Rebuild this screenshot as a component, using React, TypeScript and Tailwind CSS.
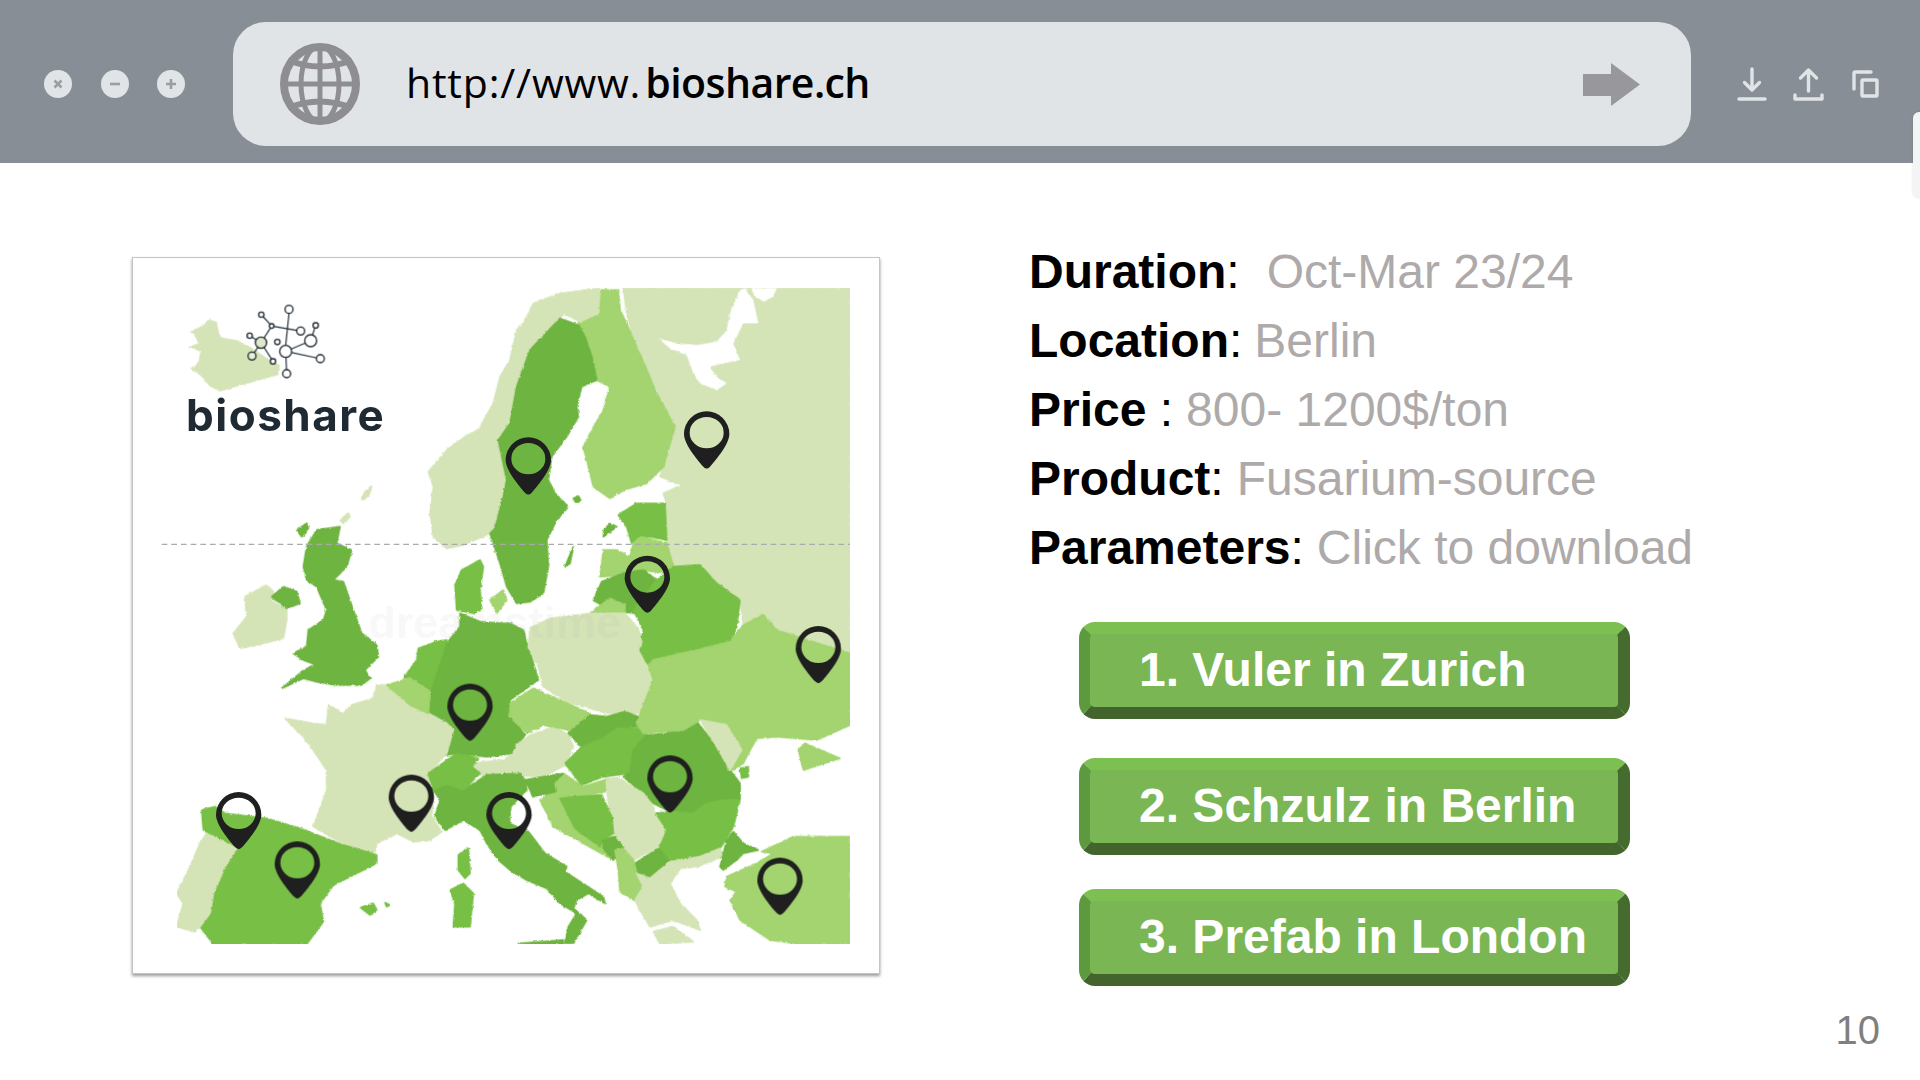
const LIGHT = "#d5e4b7";
const PALE = "#a3d46f";
const MID = "#78bf45";
const DARK = "#6eb43f";

// coordinates are 3x page pixels, origin at (170, 280)
const globalShapes: [string, string][] = [
  [LIGHT, "775,575 830,510 885,470 925,450 970,370 990,290 1020,240 1040,150 1060,130 1090,70 1170,40 1290,25 1285,100 1230,125 1180,100 1170,115 1080,210 1040,320 1020,430 985,480 1010,600 1000,650 975,745 960,760 880,795 830,805 790,770 780,700 790,620"],
  [DARK, "1170,115 1225,135 1245,170 1265,230 1280,300 1235,320 1220,380 1225,410 1190,470 1145,530 1135,600 1155,640 1195,680 1160,720 1130,780 1135,860 1120,940 1080,965 1040,970 1010,920 990,850 960,760 975,745 1000,650 1010,600 985,480 1020,430 1040,320 1080,210"],
  [DARK, "440,750 510,740 500,790 545,810 530,860 490,900 520,905 550,990 575,1060 620,1095 625,1130 585,1170 600,1195 575,1215 500,1215 440,1205 400,1195 335,1225 390,1180 420,1160 440,1155 400,1140 370,1120 410,1100 415,1050 460,1020 470,990 440,920 410,900 400,860 410,800"],
  [LIGHT, "225,950 290,915 320,945 300,960 350,990 350,1020 340,1075 260,1095 210,1105 190,1060 230,1010"],
  [DARK, "305,950 340,920 380,935 390,970 350,985"],
  [DARK, "380,750 410,730 415,745 395,770"],
  [LIGHT, "575,660 585,635 605,618 595,650"],
  [LIGHT, "510,720 535,700 540,710 520,730"],
  [MID, "855,915 875,870 930,840 940,860 930,930 935,985 910,1000 860,990"],
  [PALE, "960,960 1000,930 1010,960 980,1000"],
  [DARK, "870,1000 930,1025 1000,1030 1020,1030 1060,1050 1075,1100 1105,1200 1020,1260 1020,1310 1065,1365 1030,1410 1030,1420 950,1430 860,1420 830,1425 850,1360 830,1330 770,1300 780,1230 830,1090 870,1040"],
  [LIGHT, "905,1450 1000,1440 1030,1420 1040,1395 1080,1365 1155,1340 1195,1365 1210,1400 1185,1455 1120,1490 1020,1485 930,1485"],
  [DARK, "790,1530 830,1515 880,1530 950,1485 1050,1480 1065,1500 1070,1530 1050,1550 1022,1580 1018,1630 1075,1655 1125,1720 1190,1760 1185,1775 1300,1850 1305,1870 1255,1840 1220,1860 1210,1885 1250,1920 1210,1990 1185,1990 1195,1940 1220,1900 1170,1870 1130,1825 1070,1800 1020,1770 985,1740 950,1690 930,1650 880,1620 825,1650 795,1610 810,1560"],
  [MID, "1510,860 1590,855 1640,910 1710,960 1700,1040 1680,1085 1580,1110 1450,1140 1435,1155 1405,1110 1420,1050 1390,990 1460,900"],
];

const northEast: [string, string][] = [
  [LIGHT, "340,25 1020,25 1020,1120 860,1070 800,1050 760,1005 700,1035 690,960 620,910 570,855 490,860 470,790 470,670 460,640 515,615 450,590 495,440 440,340 410,270 375,190 350,100"],
  ["#ffffff", "445,175 500,190 560,195 620,185 650,150 660,100 690,30 705,25 730,60 745,130 700,130 670,190 690,240 640,250 600,260 620,290 650,310 620,330 570,310 550,280 530,225 480,205"],
  ["#ffffff", "725,25 800,25 790,50 760,65 730,45"],
  [PALE, "270,30 325,30 330,90 350,130 375,190 410,270 440,340 495,440 460,560 410,610 340,630 300,655 250,620 235,560 220,500 240,460 280,390 300,320 260,300 245,230 225,170 205,130 265,100"],
  [MID, "325,705 380,670 465,670 470,780 420,770 385,770 365,790 350,740"],
  [PALE, "270,890 280,810 320,810 360,830 370,790 395,770 470,790 490,860 460,880 400,870 350,885"],
  [DARK, "275,905 340,880 400,870 440,900 370,990 375,1000 300,990 250,960"],
  [PALE, "240,1000 300,955 345,975 345,1005"],
  [DARK, "165,860 190,800 180,850"],
  [DARK, "280,770 320,740 300,730 282,750"],
  ["#ffffff", "105,712 165,712 150,722 125,725"],
  [DARK, "190,655 205,648 212,660 198,668"],
];

const southWest: [string, string][] = [
  [LIGHT, "345,325 430,340 470,345 475,285 520,310 545,285 610,265 620,225 650,225 680,250 720,285 775,310 830,340 850,360 830,430 775,490 790,560 785,620 815,665 780,690 730,695 680,670 620,700 615,725 560,720 500,690 430,650 470,540 470,480 430,420 400,380"],
  [MID, "95,600 135,590 165,610 290,625 390,655 520,705 620,735 620,760 560,790 490,825 450,880 460,935 410,1002 130,1002 90,950 120,910 130,850 165,770 200,715 130,680 100,660"],
  [LIGHT, "110,670 130,680 200,715 165,770 130,850 120,910 90,950 75,965 20,950 40,880 20,850 60,770 90,700"],
  [MID, "572,893 610,880 620,900 600,915"],
  [MID, "645,878 660,885 650,890"],
  [MID, "865,735 895,715 900,790 885,805 865,780"],
  [MID, "840,840 880,820 910,850 900,950 850,950 855,880"],
  [MID, "700,205 740,150 745,115 800,95 830,90 800,180 780,240 720,200"],
  [PALE, "650,225 720,205 780,245 775,310 720,285 680,250"],
  [MID, "775,490 860,430 925,445 905,470 930,490 880,540 830,520 790,540"],
];

const southEast: [string, string][] = [
  [LIGHT, "60,55 120,25 240,10 345,10 385,55 395,100 385,120 430,210 390,310 290,310 170,275 100,230 85,170 55,110"],
  [PALE, "0,280 70,235 240,310 180,360 100,345 50,370 0,320"],
  [DARK, "175,370 240,315 290,320 345,305 385,320 385,350 320,355 280,385 215,410"],
  [MID, "165,460 215,410 280,385 320,355 385,355 410,375 370,420 360,490 280,500 215,525"],
  [DARK, "410,375 470,370 560,335 620,410 660,480 690,520 690,570 640,570 590,580 550,610 480,605 430,580 400,550 340,500 360,490 370,420"],
  [PALE, "430,150 560,120 660,95 700,45 760,15 800,60 860,80 1020,130 1020,345 920,390 800,380 740,385 715,430 700,460 665,480 695,420 650,345 570,330 520,360 400,370 380,340 395,300 430,210 415,165"],
  [LIGHT, "570,330 650,345 695,420 660,480 620,410"],
  [PALE, "865,420 885,400 990,445 880,480"],
  [MID, "690,475 715,470 715,500 695,505"],
  [MID, "435,610 480,605 550,610 590,580 640,570 690,570 670,650 630,715 570,740 480,755 445,710 465,660"],
  [LIGHT, "285,505 330,505 350,520 400,550 430,590 435,615 465,660 445,710 370,750 340,715 310,670 300,610"],
  [PALE, "130,520 160,490 220,530 285,510 285,545 230,555 150,565 200,660 285,710 310,750 220,700 130,650 90,570 135,540"],
  [MID, "150,565 275,555 305,620 310,670 280,690 270,710 195,655"],
  [DARK, "45,510 100,500 160,490 130,520 135,545 70,560"],
  [DARK, "280,690 310,680 340,710 310,750 280,715"],
  [DARK, "375,760 445,715 480,755 420,805 380,790"],
  [PALE, "315,720 340,715 370,750 380,790 400,830 370,870 330,845 325,780"],
  [LIGHT, "375,870 400,830 380,790 420,805 480,755 570,740 630,715 640,740 560,770 510,775 480,820 510,880 560,930 570,960 490,930 420,950 390,900"],
  [LIGHT, "430,965 490,950 550,995 450,1002"],
  [DARK, "630,770 650,690 670,665 700,700 745,720 700,730 680,750 640,780"],
  [PALE, "755,725 850,680 1020,680 1020,1002 870,1002 780,990 690,930 660,870 680,845 645,830 650,800 740,760 790,730"],
  [DARK, "25,1000 100,995 160,990 160,1002"],
];

const iceland = "60,155 100,135 115,118 140,125 150,170 170,175 200,180 240,200 300,240 330,255 325,285 270,300 200,320 150,335 120,320 90,285 60,265 85,250 90,215 55,200 85,190 75,170";

const pins = [
  [1610, 462], [1075, 540], [1432, 895], [1945, 1106], [1500, 1494], [1830, 1801],
  [900, 1279], [724, 1552], [1017, 1604], [206, 1604], [382, 1752],
];

const logoLines = [
  [357, 100, 347, 196], [305, 138, 392, 153], [274, 104, 305, 138], [305, 138, 273, 188],
  [239, 167, 273, 188], [273, 188, 246, 228], [273, 188, 309, 244], [347, 214, 422, 182],
  [347, 214, 451, 236], [347, 214, 350, 281], [437, 136, 422, 182],
];
const logoNodes: [number, number, number, string][] = [
  [357, 88, 12, "#fff"], [274, 104, 8, "#fff"], [305, 138, 7, "#fff"], [392, 153, 12, "#fff"],
  [437, 136, 8, "#fff"], [422, 182, 18, "#fff"], [239, 167, 8, "#fff"], [273, 188, 17, "#dfe8cb"],
  [322, 186, 8, "#fff"], [347, 214, 18, "#fff"], [246, 228, 12, "#e9f0d8"], [309, 244, 8, "#fff"],
  [451, 236, 12, "#fff"], [350, 281, 12, "#fff"],
];

function Shapes({ items, x = 0, y = 0 }: { items: [string, string][]; x?: number; y?: number }) {
  return (
    <g transform={`translate(${x} ${y})`}>
      {items.map(([fill, points], i) => (
        <polygon key={i} points={points} fill={fill} stroke={fill === "#ffffff" ? "none" : fill} strokeWidth={5} strokeLinejoin="round" />
      ))}
    </g>
  );
}

function EuropeMap() {
  return (
    <svg viewBox="-30 24 2070 1968" className="block h-[656px] w-[690px]">
      <defs>
        <filter id="rough" x="-2%" y="-2%" width="104%" height="104%">
          <feTurbulence type="fractalNoise" baseFrequency="0.09" numOctaves="2" seed="4" />
          <feDisplacementMap in="SourceGraphic" scale="8" xChannelSelector="R" yChannelSelector="G" />
          <feGaussianBlur stdDeviation="1.2" />
        </filter>
        <clipPath id="mapClip">
          <rect x="21" y="24" width="2019" height="1968" />
        </clipPath>
      </defs>
      <g clipPath="url(#mapClip)">
        <g filter="url(#rough)">
          <polygon points={iceland} fill={LIGHT} />
          <Shapes items={northEast} x={1020} />
          <Shapes items={globalShapes} />
          <Shapes items={southWest} y={990} />
          <Shapes items={southEast} x={1020} y={990} />
        </g>
      </g>
      <text x="595" y="1075" fontFamily="'Liberation Sans', sans-serif" fontWeight="700" fontSize="135" fill="#9a9a9a" fillOpacity="0.07">
        dreamstime
      </text>
      <line x1="-25" y1="793" x2="2040" y2="793" stroke="#a9a9ae" strokeWidth="3.5" strokeDasharray="17 12" />
      {pins.map(([px, py]) => (
        <path
          key={`${px}-${py}`}
          transform={`translate(${px} ${py})`}
          fill="#1f1f1f"
          fillRule="evenodd"
          d="M-68,0 A68,68 0 0 1 68,0 C68,30 30,75 10,98 Q0,109 -10,98 C-30,75 -68,30 -68,0 Z M-51,-4 a51,47 0 1 0 102,0 a51,47 0 1 0 -102,0 Z"
        />
      ))}
      <g stroke="#1f2a33" strokeWidth="3.5">
        {logoLines.map(([x1, y1, x2, y2], i) => (
          <line key={i} x1={x1} y1={y1} x2={x2} y2={y2} />
        ))}
        {logoNodes.map(([cx, cy, r, fill], i) => (
          <circle key={i} cx={cx} cy={cy} r={r} fill={fill} strokeWidth="4" />
        ))}
      </g>
    </svg>
  );
}

function Globe() {
  return (
    <svg viewBox="0 0 80 82" className="h-[82px] w-[80px]" fill="none" stroke="#8e8e92">
      <ellipse cx="40" cy="41" rx="36" ry="37" strokeWidth="8" />
      <ellipse cx="40" cy="41" rx="19" ry="38" strokeWidth="5" />
      <line x1="40" y1="3" x2="40" y2="79" strokeWidth="5" />
      <line x1="3" y1="41" x2="77" y2="41" strokeWidth="5" />
      <path d="M8 17 Q40 30 72 17" strokeWidth="6" />
      <path d="M8 65 Q40 52 72 65" strokeWidth="6" />
    </svg>
  );
}

function WindowDot({ glyph }: { glyph: "x" | "minus" | "plus" }) {
  return (
    <span className="flex h-[28px] w-[28px] items-center justify-center rounded-full bg-[#e1e4e7]">
      <svg viewBox="0 0 12 12" className="h-[12px] w-[12px]" stroke="#9a9da1" strokeWidth="2.6">
        {glyph === "x" ? <path d="M2.5 2.5 9.5 9.5M9.5 2.5 2.5 9.5" /> : null}
        {glyph === "minus" ? <path d="M1 6H11" /> : null}
        {glyph === "plus" ? <path d="M1 6H11M6 1V11" /> : null}
      </svg>
    </span>
  );
}

function TopBar() {
  return (
    <header className="flex h-[163px] shrink-0 items-center bg-[#888e95] pt-[5px]">
      <div className="ml-[44px] flex w-[189px] gap-[28.5px]">
        <WindowDot glyph="x" />
        <WindowDot glyph="minus" />
        <WindowDot glyph="plus" />
      </div>
      <div className="flex h-[124px] w-[1458px] items-center rounded-[33px] bg-[#e1e4e7] pl-[47px] pr-[51px]">
        <Globe />
        <div className="ml-[46px] -mt-[2px] flex-1 whitespace-nowrap text-[41px] text-black [font-family:'Open_Sans',sans-serif]">
          <span className="tracking-[0.8px]">http://www.</span>
          <span className="ml-[4px] font-semibold tracking-[-0.55px]">bioshare.ch</span>
        </div>
        <svg viewBox="0 0 57 43" className="h-[43px] w-[57px]">
          <polygon points="0,11 28,11 28,0 57,21.5 28,43 28,33 0,33" fill="#98989c" />
        </svg>
      </div>
      <div className="ml-[46px] flex items-center">
        <svg viewBox="0 0 30 34" className="h-[34px] w-[30px]" fill="none" stroke="#e1e4e7" strokeWidth="3.4" strokeLinecap="round" strokeLinejoin="round">
          <path d="M15 2V23M7.5 15.5 15 23 22.5 15.5M2 32H28" />
        </svg>
        <svg viewBox="0 0 31 34" className="ml-[26px] h-[34px] w-[31px]" fill="none" stroke="#e1e4e7" strokeWidth="3.4" strokeLinecap="round" strokeLinejoin="round">
          <path d="M15.5 24V3M7.5 11 15.5 3 23.5 11M2 28V32H29V28" />
        </svg>
        <svg viewBox="0 0 27 28" className="ml-[28px] h-[28px] w-[27px]" fill="none" stroke="#e1e4e7" strokeWidth="3.4">
          <path d="M2 19V3.5C2 2.6 2.6 2 3.5 2H19" strokeLinecap="round" />
          <rect x="10" y="10" width="15" height="16" rx="1" />
        </svg>
      </div>
    </header>
  );
}

function InfoLine({ label, colon = ":", gap, value }: { label: string; colon?: string; gap: string; value: string }) {
  return (
    <div className="flex h-[69px] leading-[69px]">
      <b className="font-bold text-black">{label}</b>
      <span className="whitespace-pre text-black">{colon}</span>
      <span className={`${gap} text-[#aeaaaa]`}>{value}</span>
    </div>
  );
}

function VenueButton({ label, className }: { label: string; className: string }) {
  return (
    <button
      type="button"
      className={`block h-[97px] w-[551px] rounded-[16px] border-t-[12px] border-r-[12px] border-b-[12px] border-l-[11px] border-t-[#7cc052] border-r-[#456b2f] border-b-[#43652d] border-l-[#5d9a3f] bg-[#7bb655] pb-[2px] pl-[49px] text-left text-[48px] font-bold leading-[67px] text-white ${className}`}
    >
      {label}
    </button>
  );
}

export default function App() {
  return (
    <div className="relative flex h-[1080px] w-[1920px] flex-col overflow-hidden bg-white [font-family:'Liberation_Sans',Arial,sans-serif]">
      <TopBar />
      <div className="absolute right-[-6px] top-[112px] h-[86px] w-[13px] rounded-l-[6px] bg-[#f3f4f5] shadow-[0_0_3px_rgba(0,0,0,0.12)]" />

      <main className="flex flex-1 pl-[132px] pt-[94px]">
        <section className="relative h-[717px] w-[748px] shrink-0 border border-[#c4c4c4] bg-white pl-[27px] pt-[30px] shadow-[0_2px_3px_rgba(0,0,0,0.4)]">
          <EuropeMap />
          <div className="absolute left-[53px] top-[127px] text-[44px] font-bold leading-[60px] tracking-[1.5px] text-[#1f2a33] [font-family:Inter,sans-serif]">
            bioshare
          </div>
        </section>

        <section className="ml-[149px] -mt-[20px] text-[48px]">
          <InfoLine label="Duration" colon=":" gap="ml-[27px]" value="Oct-Mar 23/24" />
          <InfoLine label="Location" colon=":" gap="ml-[12px]" value="Berlin" />
          <InfoLine label="Price" colon=" :" gap="ml-[13px]" value="800- 1200$/ton" />
          <InfoLine label="Product" colon=":" gap="ml-[13px]" value="Fusarium-source" />
          <InfoLine label="Parameters" colon=":" gap="ml-[13px]" value="Click to download" />
          <div className="ml-[50px] mt-[40px]">
            <VenueButton label="1. Vuler in Zurich" className="" />
            <VenueButton label="2. Schzulz in Berlin" className="mt-[39px]" />
            <VenueButton label="3. Prefab in London" className="mt-[34px]" />
          </div>
        </section>
      </main>

      <footer className="flex justify-end pb-[27px] pr-[40px] text-[40px] leading-[46px] text-[#7f7f7f]">10</footer>
    </div>
  );
}
